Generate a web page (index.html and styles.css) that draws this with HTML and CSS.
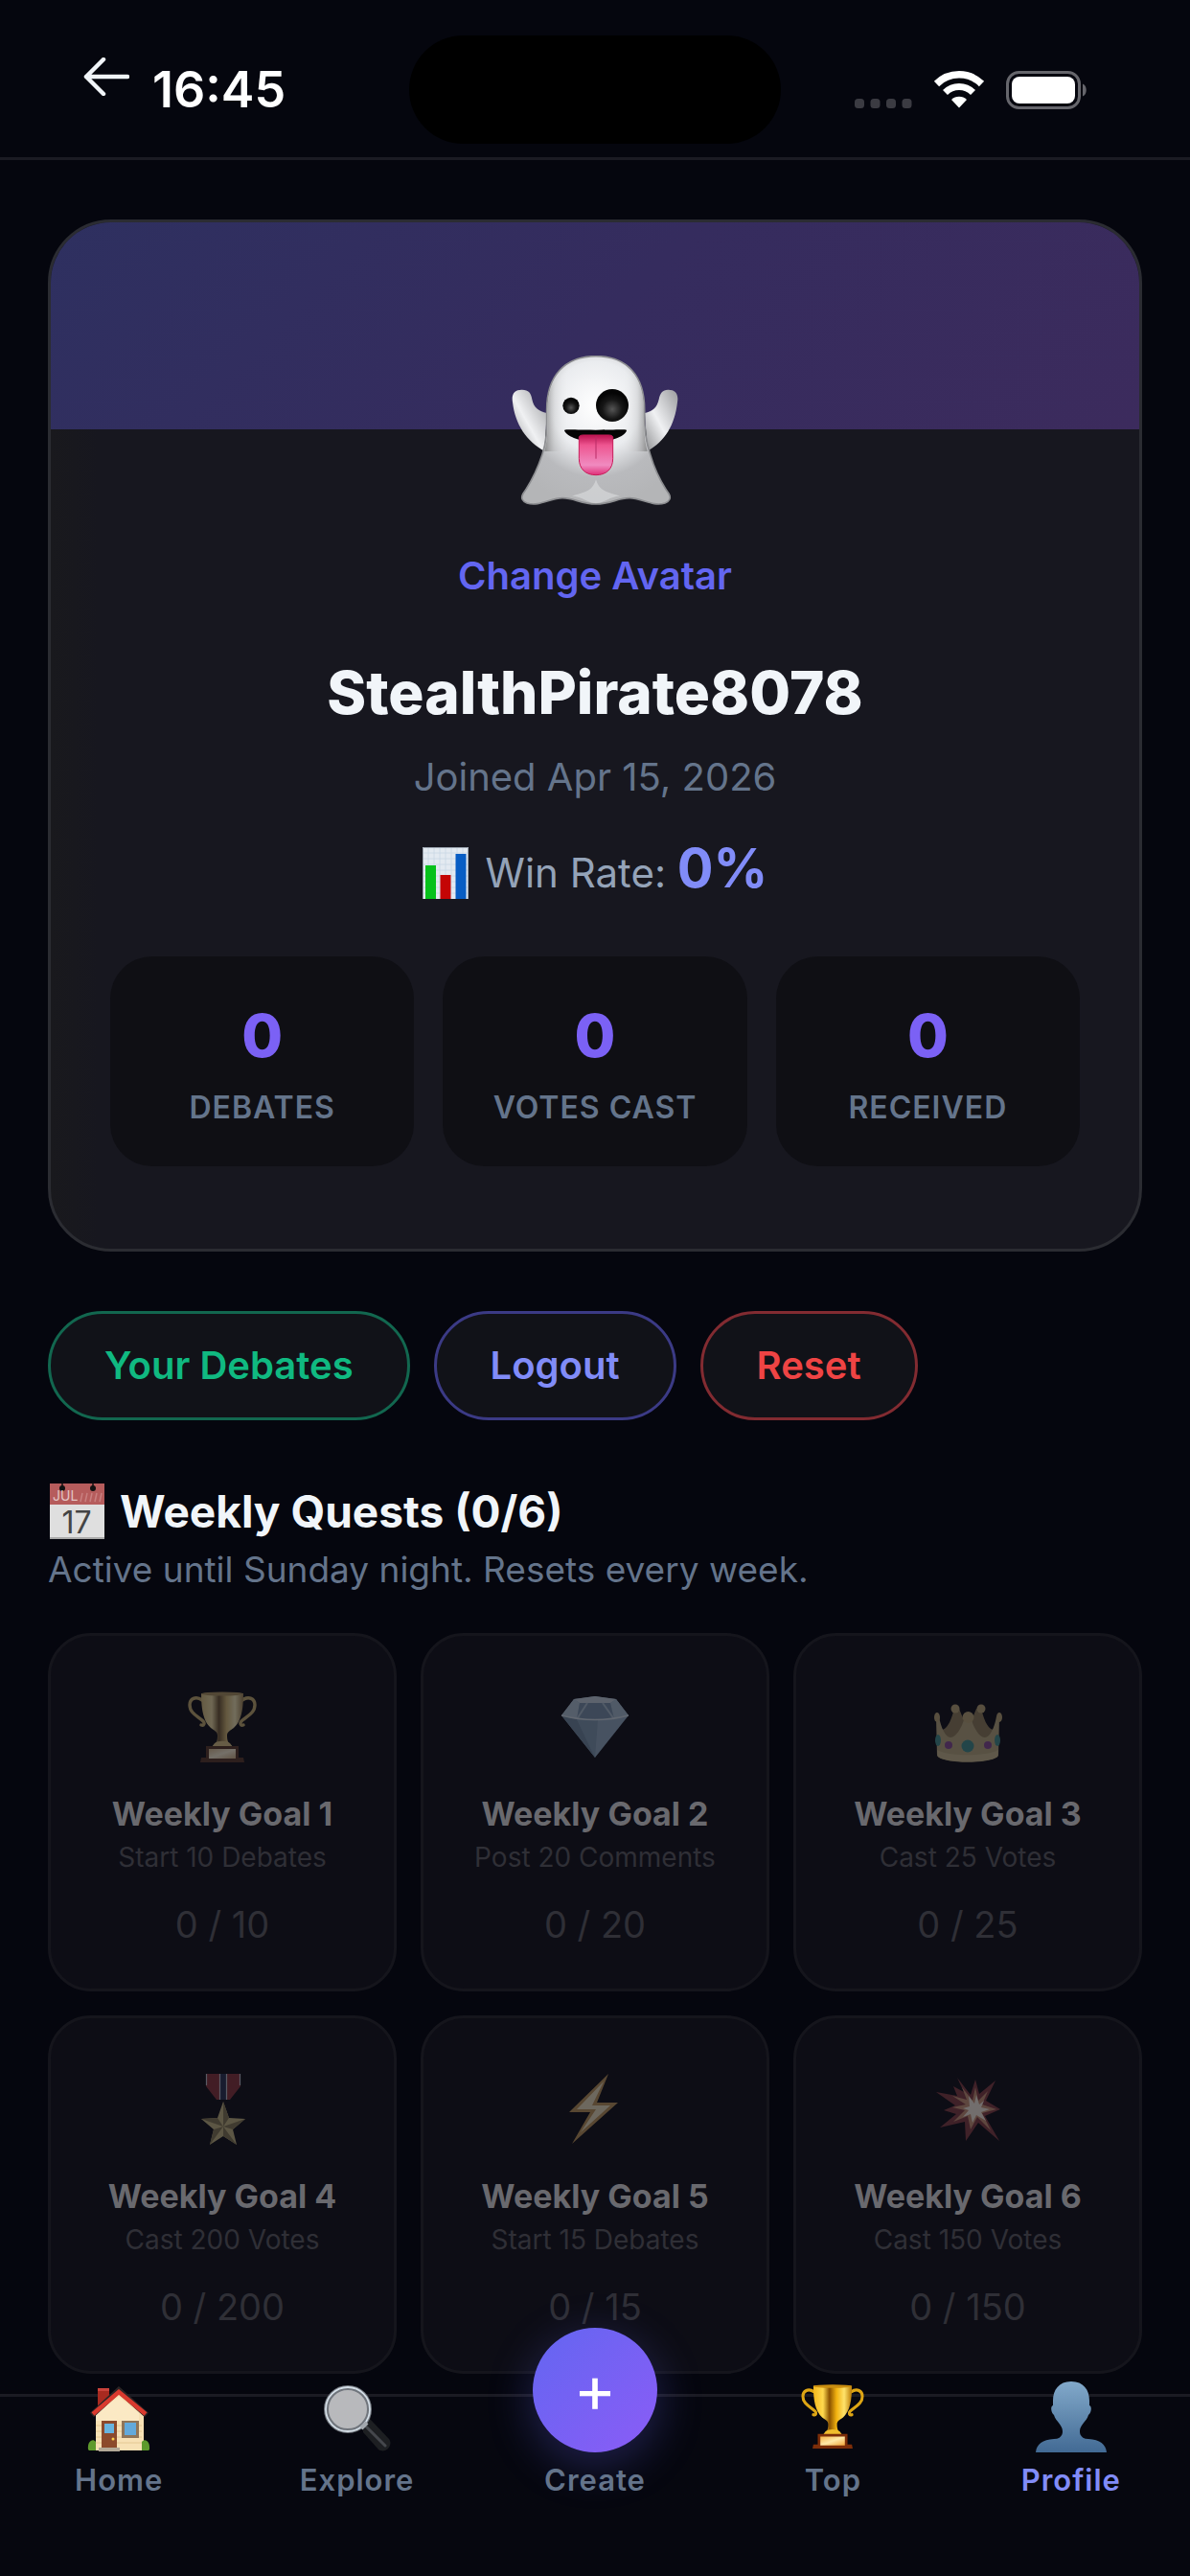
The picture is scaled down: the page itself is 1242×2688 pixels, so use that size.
FILE: index.html
```html
<!DOCTYPE html>
<html lang="en">
<head>
<meta charset="utf-8">
<meta name="viewport" content="width=device-width, initial-scale=1">
<title>Profile</title>
<link rel="stylesheet" href="styles.css">
</head>
<body>
<svg class="defs" aria-hidden="true">
  <defs>
    <linearGradient id="gold" x1="0" x2="1" y1="0" y2="0">
      <stop offset="0" stop-color="#f3b71c"/><stop offset=".25" stop-color="#ffd94e"/><stop offset=".42" stop-color="#8a5200"/><stop offset=".6" stop-color="#f2b20f"/><stop offset=".8" stop-color="#ffe36b"/><stop offset="1" stop-color="#b97a04"/>
    </linearGradient>
    <linearGradient id="plate" x1="0" x2="1" y1="0" y2="1">
      <stop offset="0" stop-color="#f6b54a"/><stop offset=".5" stop-color="#ffe9a8"/><stop offset="1" stop-color="#f0a63a"/>
    </linearGradient>
    <symbol id="trophy" viewBox="0 0 72 74">
      <path d="M15 9C8 4 2 8 2 14c0 9 9 12 14 17 2 2 1 5-2 4M57 9c7-5 13-1 13 5 0 9-9 12-14 17-2 2-1 5 2 4" fill="none" stroke="#dda514" stroke-width="3.4" stroke-linecap="round"/>
      <path d="M14 2h44c0 16-2 29-10 36-4 3-7 4-7 8 0 5 1 8 5 11H26c4-3 5-6 5-11 0-4-3-5-7-8C16 31 14 18 14 2z" fill="url(#gold)"/>
      <ellipse cx="36" cy="2.5" rx="22" ry="2" fill="#c98d10"/>
      <path d="M28 54c4-3 12-3 16 0l3 4H25z" fill="#f0bd2c"/>
      <path d="M19 57h34v12h5l1 5H13l1-5h5z" fill="#7c2d08"/>
      <path d="M22 60h28v10H22z" fill="url(#plate)"/>
    </symbol>
  </defs>
</svg>

<header class="topbar">
  <div class="topbar-left">
    <button class="back" type="button" aria-label="Back">
      <svg width="48" height="40" viewBox="0 0 48 40"><path d="M21 2 3 20l18 18M3 20h43" fill="none" stroke="#f1f5f9" stroke-width="4.5" stroke-linecap="round" stroke-linejoin="round"/></svg>
    </button>
    <span class="time">16:45</span>
  </div>
  <div class="island"></div>
  <div class="topbar-right">
    <svg class="signal" width="60" height="10" viewBox="0 0 60 10" fill="#3b3b42"><rect width="10" height="10" rx="3.5"/><rect x="16.500" width="10" height="10" rx="3.5"/><rect x="33" width="10" height="10" rx="3.5"/><rect x="49.500" width="10" height="10" rx="3.5"/></svg>
    <svg width="54" height="39" viewBox="0 0 54 39" fill="none" stroke="#fff"><path d="M3.500 13.500a33.500 33.500 0 0 1 47 0" stroke-width="7.500"/><path d="M12.500 22.500a20.500 20.500 0 0 1 29 0" stroke-width="7"/><path d="M27 38.500l-8-8.500a11.500 11.500 0 0 1 16 0z" fill="#fff" stroke="none"/></svg>
    <svg width="86" height="40" viewBox="0 0 86 40"><rect x="1.500" y="1.500" width="75" height="37" rx="12" fill="none" stroke="#66666c" stroke-width="3"/><rect x="6" y="6" width="66" height="28" rx="8" fill="#fff"/><path d="M80 13.500c5 2 5 11 0 13z" fill="#66666c"/></svg>
  </div>
</header>

<main class="content">
  <section class="profile">
    <div class="banner"></div>
    <svg class="avatar" width="174" height="156" viewBox="334 92 520 468" role="img" aria-label="Ghost avatar">
      <defs>
        <radialGradient id="ghostBody" cx="597" cy="250" r="310" gradientUnits="userSpaceOnUse">
          <stop offset="0" stop-color="#fff"/><stop offset=".45" stop-color="#eaecef"/><stop offset=".72" stop-color="#b9babd"/><stop offset="1" stop-color="#b4b5b7"/>
        </radialGradient>
        <linearGradient id="ghostSide" x1="436" x2="758" y1="0" y2="0" gradientUnits="userSpaceOnUse">
          <stop offset="0" stop-color="#777" stop-opacity=".75"/><stop offset=".1" stop-color="#aaa" stop-opacity=".25"/><stop offset=".25" stop-color="#fff" stop-opacity="0"/><stop offset=".75" stop-color="#fff" stop-opacity="0"/><stop offset=".9" stop-color="#aaa" stop-opacity=".25"/><stop offset="1" stop-color="#777" stop-opacity=".75"/>
        </linearGradient>
        <linearGradient id="tongue" x1="0" x2="0" y1="0" y2="1"><stop offset="0" stop-color="#b9124f"/><stop offset=".25" stop-color="#ee5590"/><stop offset=".75" stop-color="#f08bc0"/><stop offset="1" stop-color="#df2f78"/></linearGradient>
        <radialGradient id="eye" cx=".5" cy=".62" r=".5"><stop offset="0" stop-color="#555"/><stop offset=".6" stop-color="#161616"/><stop offset="1" stop-color="#050505"/></radialGradient>
        <linearGradient id="ghostArm" x1="0" x2="1" y1="1" y2="0"><stop offset="0" stop-color="#8d8e90"/><stop offset=".45" stop-color="#f0f1f3"/><stop offset="1" stop-color="#9a9b9e"/></linearGradient>
      </defs>
      <path d="M336 238C331 210 345 198 366 199c20 0 28 10 31 30 5 26 22 38 46 43l-7 119c-56-31-92-83-100-153z" fill="url(#ghostArm)"/>
      <path d="M852 238c5-28-9-40-30-39-16 0-24 10-28 30-6 26-20 38-44 43l8 119c56-31 86-83 94-153z" fill="url(#ghostArm)"/>
      <path d="M597 94C500 94 443 155 443 262c0 66 1 93-14 140-16 48-38 91-60 122-8 14-3 24 12 30 38 12 74-16 111-16 38 0 58 19 105 19s67-19 105-19c37 0 73 28 111 16 15-6 20-16 12-30-22-31-44-74-58-122-15-47-18-74-18-140C749 155 694 94 597 94z" fill="url(#ghostBody)" stroke="#8d8e91" stroke-width="5"/>
      <path d="M597 97C502 97 446 158 446 262c0 60 0 90-10 130h322c-10-40-11-70-11-130C747 158 692 97 597 97z" fill="url(#ghostSide)"/>
      <path d="M597 480c-10 38-40 40-75 52 30 0 50 22 75 22s45-22 75-22c-35-12-65-14-75-52z" fill="#dcdddf" opacity=".6"/>
      <circle cx="519" cy="249" r="26" fill="url(#eye)"/><circle cx="648" cy="248" r="51" fill="url(#eye)"/>
      <path d="M498 327c1-5 12-2 98-2s97-3 97 2c-4 16-40 34-97 34s-92-18-98-34z" fill="#050505"/>
      <path d="M544 348c1-5 5-7 14-7h78c9 0 13 2 14 7v66c0 34-22 52-53 52s-53-18-53-52z" fill="url(#tongue)" stroke="#c81a58" stroke-width="3"/>
      <path d="M597 345v70" stroke="#b92d66" stroke-width="3"/>
    </svg>
    <button class="change-avatar" type="button">Change Avatar</button>
    <h1 class="name">StealthPirate8078</h1>
    <p class="joined">Joined Apr 15, 2026</p>
    <p class="winrate">
      <svg width="48" height="54" viewBox="0 0 48 54" aria-hidden="true"><path d="M0 0h48v54H0z" fill="#e3eaf1"/><path d="M0 6h48M0 12h48M0 18h48M0 24h48M0 30h48M0 36h48M0 42h48M0 48h48M6 0v54M12 0v54M18 0v54M24 0v54M30 0v54M36 0v54M42 0v54" stroke="#c9d8e6" stroke-width=".8"/><path d="M3 19h11v35H3z" fill="#06c11b"/><path d="M18.500 29h11v25h-11z" fill="#c40505"/><path d="M34.500 7h11v47h-11z" fill="#075dc4"/><path d="M.5 54V.5h47V54" fill="none" stroke="#9ca5b0"/></svg>
      <span>Win Rate: <strong>0%</strong></span>
    </p>
    <dl class="stats">
      <div class="stat"><dd>0</dd><dt>DEBATES</dt></div>
      <div class="stat"><dd>0</dd><dt>VOTES CAST</dt></div>
      <div class="stat"><dd>0</dd><dt>RECEIVED</dt></div>
    </dl>
  </section>

  <div class="actions">
    <button class="pill pill-green" type="button">Your Debates</button>
    <button class="pill pill-indigo" type="button">Logout</button>
    <button class="pill pill-red" type="button">Reset</button>
  </div>

  <section class="quests">
    <h2 class="quests-title">
      <svg width="60" height="60" viewBox="0 0 60 60" aria-hidden="true"><path d="M2 1h57v24H2z" fill="#b65c5c"/><path d="M2 23h57v35H2z" fill="#dfdfdf"/><path d="M2 57h57v2H2z" fill="#aaa"/><path d="M15 0v7M47 0v7" stroke="#111" stroke-width="1.5"/><circle cx="15" cy="6" r="3" fill="#111"/><circle cx="47" cy="6" r="3" fill="#111"/><path d="M34 20l2-9M39 20l2-9M44 20l2-9M49 20l2-9M54 20l2-9" stroke="#c98080" stroke-width="1.5"/><text class="cal-month" x="5" y="19">JUL</text><text class="cal-day" x="30" y="53">17</text></svg>
      Weekly Quests (0/6)
    </h2>
    <p class="quests-sub">Active until Sunday night. Resets every week.</p>
    <div class="grid">
      <article class="goal">
        <svg class="goal-icon" width="72" height="74"><use href="#trophy"/></svg>
        <h3>Weekly Goal 1</h3><p class="desc">Start 10 Debates</p><p class="count">0 / 10</p>
      </article>
      <article class="goal">
        <svg class="goal-icon goal-icon-cool" width="72" height="74" viewBox="0 0 72 74"><path d="M1 25 14 8 36 5l22 3 13 17-35 44z" fill="#86a9c9"/><path d="M14 8 20 12 52 12 58 8 36 5z" fill="#b9cde0"/><path d="M1 25 14 8l6 4-3 17z" fill="#a4bfd8"/><path d="M71 25 58 8l-6 4 4 17z" fill="#9ab8d3"/><path d="M20 12h32l4 17H17z" fill="#6c90b4"/><path d="M28 12l-11 17M44 12l12 17" stroke="#9db9d2" stroke-width="2"/><path d="M17 29l19 40 3-39z" fill="#7298bb"/><path d="M1 25l16 4 19 40z" fill="#6387a8"/><path d="M1 25q35 9 70 0" fill="none" stroke="#c2d5e6" stroke-width="1.500"/></svg>
        <h3>Weekly Goal 2</h3><p class="desc">Post 20 Comments</p><p class="count">0 / 20</p>
      </article>
      <article class="goal">
        <svg class="goal-icon goal-icon-muted" width="72" height="74" viewBox="0 0 72 74"><path d="M8 40c8 0 12-14 14-23l5 1 9 22 9-22 5-1c2 9 6 23 14 23l-6 20H14z" fill="#8c7b58"/><path d="M3 27l3-1c2 12 7 22 12 22 8 0 15-18 16-26h4c1 8 8 26 16 26 5 0 10-10 12-22l3 1-1 40c-5 9-59 9-64 0z" fill="#b3a57c"/><path d="M4 61c10 7 54 7 64 0l-1 7c-8 7-54 7-62 0z" fill="#c2b48b"/><g fill="#b3a072"><circle cx="23" cy="18" r="4.500"/><circle cx="50" cy="18" r="4.500"/><circle cx="36.500" cy="27" r="6"/><ellipse cx="4" cy="27" rx="3" ry="5"/><ellipse cx="69" cy="27" rx="3" ry="5"/></g><g fill="#3f8a88"><ellipse cx="36" cy="57" rx="6.500" ry="6.500"/><ellipse cx="5" cy="51" rx="3" ry="6"/><ellipse cx="67" cy="51" rx="3" ry="6"/></g><circle cx="16" cy="56" r="4" fill="#80488f"/><circle cx="57" cy="56" r="4" fill="#80488f"/></svg>
        <h3>Weekly Goal 3</h3><p class="desc">Cast 25 Votes</p><p class="count">0 / 25</p>
      </article>
      <article class="goal">
        <svg class="goal-icon goal-icon-muted" width="72" height="74" viewBox="0 0 72 74"><path d="M19 0h36v13L44 27H30L19 13z" fill="#82323a"/><path d="M33 0h8v27h-8z" fill="#26304f"/><path d="M33.500 0v27M40.500 0v27M19.500 0v12M54.500 0v12" stroke="#b9b9c4" stroke-width="1.200"/><path d="M37 29l6 17 17 1-13 11 4 16-14-9-14 9 4-16-13-11 17-1z" fill="#bdb07e"/><path d="M37 29v26l6-9zM60 47 37 55l10 3zM51 74 37 55v10zM23 74l14-19-10 3zM14 47l23 8-6-9z" fill="#7f7452"/></svg>
        <h3>Weekly Goal 4</h3><p class="desc">Cast 200 Votes</p><p class="count">0 / 200</p>
      </article>
      <article class="goal">
        <svg class="goal-icon goal-icon-muted" width="72" height="74" viewBox="0 0 72 74"><path d="M50 0 9 40h22L12 73 60 30H38z" fill="#b38e56"/><path d="M45 8 17 37h20L21 61 52 33H33z" fill="#e2d6b8"/></svg>
        <h3>Weekly Goal 5</h3><p class="desc">Start 15 Debates</p><p class="count">0 / 15</p>
      </article>
      <article class="goal">
        <svg class="goal-icon goal-icon-muted" width="72" height="74" viewBox="0 0 72 74"><path d="M25 4l14 18 5-16 4 15L65 7 55 28l15 9-16 7 15 26-22-19-13 19-1-20-26 6 17-14-13-4 12-5-20-14 22 4-4-10 11 6z" fill="#7d3a40"/><path d="M30 14l11 14 3-14 3 14 10-10-6 14 15 5-15 4 9 18-14-14-7 13-3-14-15 6 12-12-13-3 14-3-14-9 15 4z" fill="#c08e72"/><path d="M37 23l6 8 2-9 3 10 5-4-3 7 9 2-9 3 5 9-10-6-4 8-2-9-8 3 6-7-6-2 7-2z" fill="#eee4d8"/></svg>
        <h3>Weekly Goal 6</h3><p class="desc">Cast 150 Votes</p><p class="count">0 / 150</p>
      </article>
    </div>
  </section>
</main>

<nav class="tabs" aria-label="Main">
  <a class="tab" href="#home">
    <svg width="74" height="74" viewBox="0 0 74 74" aria-hidden="true"><path d="M15 8h12v20H15z" fill="#a82a20"/><path d="M15 7h12v3H15z" fill="#c9423a"/><path d="M37 11 63 32v40H13V32z" fill="#f7e1b5"/><path d="M37 16 58 33v8H13v-8z" fill="#fbe9c4"/><path d="M13 46h48M13 52h48M13 58h48M13 64h48" stroke="#e4c892"/><path d="M9 35 37 9l29 26" fill="none" stroke="#2b2425" stroke-width="6"/><path d="M10 34 37 11l28 23" fill="none" stroke="#d93a2e" stroke-width="4.500"/><path d="M19 41h16v30H19z" fill="#8c4a2c"/><path d="M22 44h10v10H22z" fill="#69b4df"/><circle cx="31" cy="60" r="1.500" fill="#ffd24a"/><path d="M16 69h22v4H16z" fill="#b3a998"/><path d="M40 41h18v18H40z" fill="#8f7557"/><path d="M43 43h12v13H43z" fill="#62a9da"/><path d="M5 71c-1-9 5-12 8-8v9H6zM69 71c1-9-5-12-8-8v9h7z" fill="#5d9a2c"/></svg>
    <span>Home</span>
  </a>
  <a class="tab" href="#explore">
    <svg width="74" height="74" viewBox="0 0 74 74" aria-hidden="true"><path d="M43 44l7-5 20 21c5 7-4 16-11 11L43 53z" fill="#1d1f22"/><path d="M44 45l22 22" stroke="#44474c" stroke-width="3" stroke-linecap="round"/><circle cx="27" cy="29" r="22.500" fill="#b8b9bc" stroke="#70757c" stroke-width="5"/><circle cx="27" cy="29" r="23" fill="none" stroke="#d3dde6" stroke-width="1.800"/><path d="M41 49l6-6" stroke="#a3a8ae" stroke-width="4"/></svg>
    <span>Explore</span>
  </a>
  <a class="tab" href="#create"><b class="create">+</b><span>Create</span></a>
  <a class="tab" href="#top">
    <svg width="66" height="74" viewBox="0 -3 72 81" aria-hidden="true"><use href="#trophy" width="72" height="74"/></svg>
    <span>Top</span>
  </a>
  <a class="tab tab-active" href="#profile" aria-current="page">
    <svg width="74" height="74" viewBox="0 0 74 74" aria-hidden="true"><defs><linearGradient id="bust" x1="0" x2="0" y1="0" y2="1"><stop offset="0" stop-color="#82a9ca"/><stop offset="1" stop-color="#426a94"/></linearGradient></defs><path d="M37 0c13 0 19 9 19 20v5c3 1 2 8-1 10-2 7-9 10-9 17 0 5 3 8 9 8 12 1 18 5 19 14H0c1-9 7-13 19-14 6 0 9-3 9-8 0-7-7-10-9-17-3-2-4-9-1-10v-5C18 9 24 0 37 0z" fill="url(#bust)"/></svg>
    <span>Profile</span>
  </a>
</nav>
</body>
</html>
```

FILE: styles.css
```css
* {
  box-sizing: border-box;
  margin: 0;
}

body {
  min-height: 100vh;
  display: flex;
  flex-direction: column;
  background: #05060e;
  color: #f1f5f9;
  font-family: Inter, "Liberation Sans", sans-serif;
}

button {
  padding: 0;
  border: 0;
  background: none;
  color: inherit;
  font: inherit;
  cursor: pointer;
}

svg {
  display: block;
  flex: none;
}

.defs {
  position: absolute;
  width: 0;
  height: 0;
}

/* Top bar */
.topbar {
  display: grid;
  grid-template-columns: 1fr 388px 1fr;
  padding: 37px 0 14px;
  border-bottom: 3px solid #1b1b23;
}

.topbar-left {
  display: flex;
  align-items: flex-start;
  gap: 24px;
  padding-left: 87px;
}

.back {
  display: flex;
  align-items: center;
  height: 86px;
}

.time {
  color: #fff;
  font-size: 52px;
  font-weight: 600;
  line-height: 113px;
}

.island {
  height: 113px;
  border-radius: 57px;
  background: #000;
}

.topbar-right {
  display: flex;
  align-items: center;
  justify-content: flex-end;
  gap: 22px;
  padding-right: 106px;
}

.signal {
  margin-top: 28px;
}

.content {
  padding: 62px 50px 19px;
}

/* Profile card */
.profile {
  display: flex;
  flex-direction: column;
  align-items: center;
  padding-bottom: 86px;
  border: 3px solid #2b2c32;
  border-radius: 66px;
  background: linear-gradient(90deg, #19191d, #17171f 50px);
  overflow: hidden;
}

.banner {
  align-self: stretch;
  height: 216px;
  background: linear-gradient(135deg, #2e3060, #352c5e 50%, #3c2b5d);
}

.avatar {
  margin-top: -77px;
}

.change-avatar {
  margin-top: 50px;
  color: #6366f1;
  font-size: 40px;
  font-weight: 600;
  line-height: 48px;
}

.name {
  margin-top: 60px;
  font-size: 62px;
  font-weight: 800;
  line-height: 76px;
}

.joined {
  margin-top: 26px;
  color: #64748b;
  font-size: 40px;
  line-height: 48px;
}

.winrate {
  display: flex;
  align-items: center;
  gap: 18px;
  margin-top: 42px;
  color: #94a3b8;
  font-size: 42px;
  line-height: 68px;
}

.winrate strong {
  color: #818cf8;
  font-size: 56px;
  font-weight: 700;
  line-height: 54px;
}

.stats {
  align-self: stretch;
  display: grid;
  grid-template-columns: repeat(3, 1fr);
  gap: 30px;
  margin-top: 53px;
  padding: 0 62px;
}

.stat {
  display: flex;
  flex-direction: column;
  align-items: center;
  gap: 20px;
  padding: 47px 0 42px;
  border-radius: 44px;
  background: #0f0f14;
}

.stat dd {
  color: #7b61f5;
  font-size: 62px;
  font-weight: 800;
  line-height: 72px;
}

.stat dt {
  color: #64748b;
  font-size: 32px;
  font-weight: 600;
  letter-spacing: 1px;
  line-height: 38px;
}

/* Account actions */
.actions {
  display: flex;
  gap: 25px;
  margin-top: 62px;
}

.pill {
  padding: 30px 56px;
  border: 3px solid;
  border-radius: 57px;
  background: #111218;
  font-size: 40px;
  font-weight: 600;
  line-height: 48px;
}

.pill-green {
  border-color: #12674f;
  color: #10b981;
}

.pill-indigo {
  border-color: #3b3a85;
  color: #818cf8;
}

.pill-red {
  border-color: #822b31;
  color: #ef4444;
}

/* Weekly quests */
.quests-title {
  display: flex;
  align-items: center;
  gap: 15px;
  margin-top: 65px;
  font-size: 46px;
  font-weight: 700;
  line-height: 60px;
}

.cal-month {
  fill: #e3c4c4;
  font-size: 14px;
  font-weight: 400;
}

.cal-day {
  fill: #444;
  font-size: 32px;
  font-weight: 400;
  text-anchor: middle;
}

.quests-sub {
  margin-top: 8px;
  color: #64748b;
  font-size: 37px;
  line-height: 46px;
}

.grid {
  display: grid;
  grid-template-columns: repeat(3, 1fr);
  gap: 25px;
  margin-top: 43px;
}

.goal {
  display: flex;
  flex-direction: column;
  align-items: center;
  padding: 58px 0 44px;
  border: 3px solid #15151c;
  border-radius: 45px;
  background: #0d0d15;
}

.goal-icon {
  filter: saturate(0.4);
  opacity: 0.45;
}

.goal-icon-cool {
  filter: saturate(0.7);
}

.goal-icon-muted {
  filter: none;
}

.goal h3 {
  margin-top: 34px;
  color: #69696e;
  font-size: 34px;
  font-weight: 700;
  line-height: 40px;
}

.desc {
  margin-top: 8px;
  color: #2f2f36;
  font-size: 28px;
  line-height: 34px;
}

.count {
  margin-top: 30px;
  color: #2f2f36;
  font-size: 38px;
  line-height: 46px;
}

/* Bottom tab bar */
.tabs {
  position: relative;
  z-index: 1;
  display: grid;
  grid-template-columns: repeat(5, 1fr);
  height: 190px;
  margin-top: auto;
  border-top: 3px solid #1b1b23;
  background: #06070f;
}

.tab {
  display: flex;
  flex-direction: column;
  align-items: center;
  gap: 8px;
  margin-top: -16px;
  color: #64748b;
  font-size: 31px;
  font-weight: 600;
  letter-spacing: 1px;
  line-height: 42px;
  text-decoration: none;
}

.tab-active {
  color: #818cf8;
}

.create {
  width: 130px;
  height: 130px;
  margin-top: -56px;
  border-radius: 50%;
  background: linear-gradient(135deg, #6366f1, #8b5cf6);
  box-shadow: 0 12px 48px rgba(99, 102, 241, 0.3);
  color: #fff;
  font-size: 68px;
  font-weight: 400;
  letter-spacing: 0;
  line-height: 126px;
  text-align: center;
}
```
